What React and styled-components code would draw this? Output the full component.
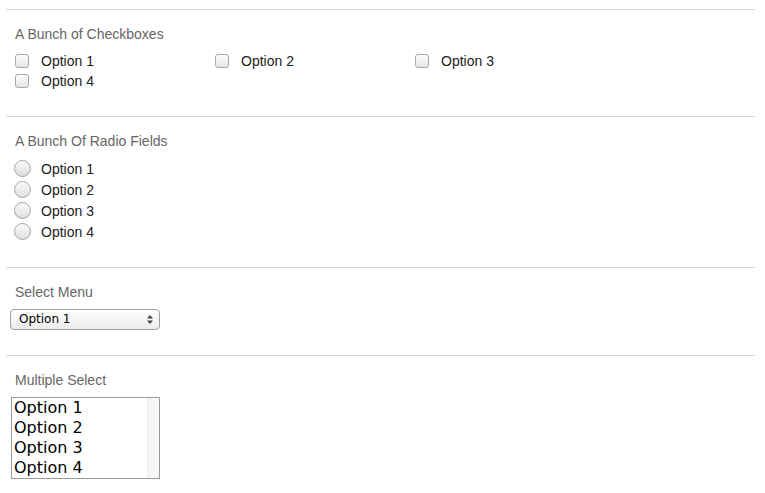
import React from "react";
import styled, { createGlobalStyle } from "styled-components";

const Global = createGlobalStyle`
  body {
    margin: 0;
    background: #fff;
    font-family: "Liberation Sans", Arial, sans-serif;
  }
`;

const Page = styled.div`
  padding: 9px 10px 0 6px;
`;

const Section = styled.section`
  border-top: 1px solid #d6d6d6;
  padding: 16px 0 25px 9px;
`;

const Heading = styled.div`
  font-size: 14px;
  line-height: 16px;
  color: #666;
  margin-bottom: 9px;
`;

const CheckGrid = styled.div`
  display: grid;
  grid-template-columns: repeat(3, 200px);
`;

const RadioList = styled.div`
  display: flex;
  flex-direction: column;
`;

const Choice = styled.label`
  display: flex;
  align-items: center;
  height: ${(p) => (p.$radio ? "21px" : "20px")};
  font-size: 14px;
  color: #222;
  gap: ${(p) => (p.$radio ? "10px" : "12px")};
  margin-left: ${(p) => (p.$radio ? "-1px" : "0")};
`;

const Box = styled.span`
  width: 12px;
  height: 12px;
  border: 1px solid #a8a8a8;
  border-radius: 3px;
  background: linear-gradient(#fdfdfd, #e6e6e6);
  box-shadow: inset 0 1px 0 #fff;
  flex: none;
`;

const Radio = styled.span`
  width: 15px;
  height: 15px;
  border: 1px solid #a5a5a5;
  border-radius: 50%;
  background: linear-gradient(#fafafa, #dedede);
  flex: none;
`;

const SelectBox = styled.div`
  position: relative;
  width: 148px;
  height: 19px;
  margin-left: -5px;
  border: 1px solid #9f9f9f;
  border-radius: 4px;
  background: linear-gradient(#ffffff, #ececec);
  font-family: "DejaVu Sans", "Liberation Sans", sans-serif;
  font-size: 12px;
  line-height: 19px;
  color: #000;
`;

const SelectText = styled.span`
  padding-left: 8px;
`;

const Arrows = styled.svg`
  position: absolute;
  right: 6px;
  top: 5px;
`;

const ListBox = styled.div`
  display: flex;
  width: 147px;
  height: 80px;
  margin-left: -4px;
  border: 1px solid #9a9a9a;
  font-family: "DejaVu Sans", "Liberation Sans", sans-serif;
  font-size: 16px;
  color: #000;
`;

const ListItems = styled.div`
  flex: 1;
  padding-left: 2px;
`;

const ListItem = styled.div`
  height: 20px;
  line-height: 20px;
`;

const Track = styled.div`
  width: 11px;
  border-left: 1px solid #ececec;
  background: linear-gradient(to right, #f4f4f4, #fafafa);
`;

const options = ["Option 1", "Option 2", "Option 3", "Option 4"];

export default function App() {
  return (
    <Page>
      <Global />
      <Section>
        <Heading>A Bunch of Checkboxes</Heading>
        <CheckGrid>
          {options.map((o) => (
            <Choice key={o}>
              <Box />
              {o}
            </Choice>
          ))}
        </CheckGrid>
      </Section>
      <Section>
        <Heading>A Bunch Of Radio Fields</Heading>
        <RadioList>
          {options.map((o) => (
            <Choice key={o} $radio>
              <Radio />
              {o}
            </Choice>
          ))}
        </RadioList>
      </Section>
      <Section>
        <Heading>Select Menu</Heading>
        <SelectBox>
          <SelectText>Option 1</SelectText>
          <Arrows width="6" height="9" viewBox="0 0 6 9">
            <path d="M0 3.5 L3 0 L6 3.5 Z" fill="#444" />
            <path d="M0 5.5 L3 9 L6 5.5 Z" fill="#444" />
          </Arrows>
        </SelectBox>
      </Section>
      <Section>
        <Heading>Multiple Select</Heading>
        <ListBox>
          <ListItems>
            {options.map((o) => (
              <ListItem key={o}>{o}</ListItem>
            ))}
          </ListItems>
          <Track />
        </ListBox>
      </Section>
    </Page>
  );
}
